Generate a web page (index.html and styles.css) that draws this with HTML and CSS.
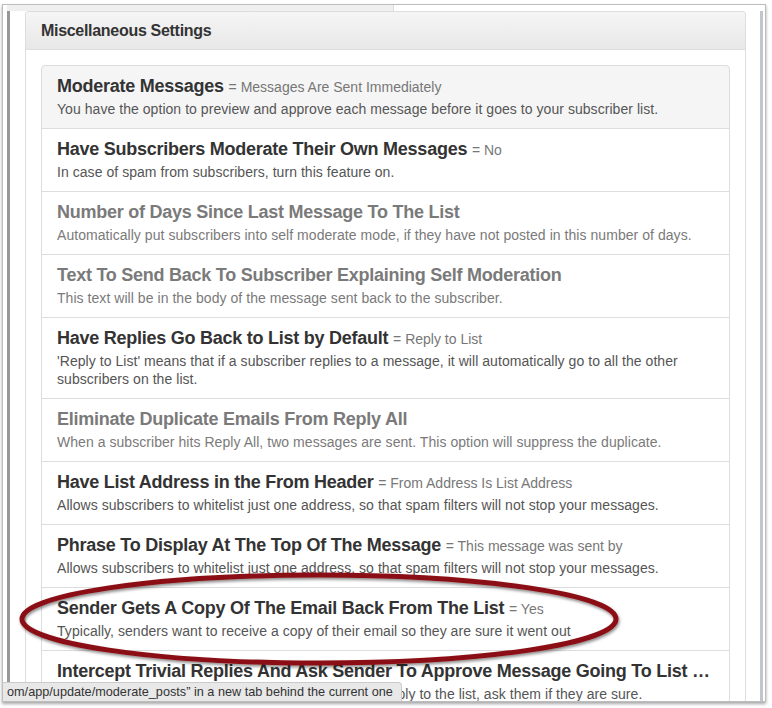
FILE: index.html
```html
<!doctype html>
<html lang="en">
<head>
    <meta charset="UTF-8">
    <title>Miscellaneous Settings</title>
    <link rel="stylesheet" href="styles.css">
</head>
<body>
    <div class="shot">
        <div class="gutter"></div>
        <div class="app">
            <div class="topstrip"><span class="tab"></span></div>
            <div class="content">
                <div class="panel">
                    <div class="panel-heading">
                        <h3 class="panel-title">Miscellaneous Settings</h3>
                    </div>
                    <div class="panel-body">
                        <ul class="list-group">
                            <li class="item hover">
                                <h4>Moderate Messages <small>= Messages Are Sent Immediately</small></h4>
                                <p>You have the option to preview and approve each message before it goes to your subscriber list.</p>
                            </li>
                            <li class="item">
                                <h4>Have Subscribers Moderate Their Own Messages <small>= No</small></h4>
                                <p>In case of spam from subscribers, turn this feature on.</p>
                            </li>
                            <li class="item disabled">
                                <h4>Number of Days Since Last Message To The List</h4>
                                <p>Automatically put subscribers into self moderate mode, if they have not posted in this number of days.</p>
                            </li>
                            <li class="item disabled">
                                <h4>Text To Send Back To Subscriber Explaining Self Moderation</h4>
                                <p>This text will be in the body of the message sent back to the subscriber.</p>
                            </li>
                            <li class="item">
                                <h4>Have Replies Go Back to List by Default <small>= Reply to List</small></h4>
                                <p>'Reply to List' means that if a subscriber replies to a message, it will automatically go to all the other subscribers on the list.</p>
                            </li>
                            <li class="item disabled">
                                <h4>Eliminate Duplicate Emails From Reply All</h4>
                                <p>When a subscriber hits Reply All, two messages are sent. This option will suppress the duplicate.</p>
                            </li>
                            <li class="item">
                                <h4>Have List Address in the From Header <small>= From Address Is List Address</small></h4>
                                <p>Allows subscribers to whitelist just one address, so that spam filters will not stop your messages.</p>
                            </li>
                            <li class="item">
                                <h4>Phrase To Display At The Top Of The Message <small>= This message was sent by</small></h4>
                                <p>Allows subscribers to whitelist just one address, so that spam filters will not stop your messages.</p>
                            </li>
                            <li class="item">
                                <h4>Sender Gets A Copy Of The Email Back From The List <small>= Yes</small></h4>
                                <p>Typically, senders want to receive a copy of their email so they are sure it went out</p>
                            </li>
                            <li class="item">
                                <h4>Intercept Trivial Replies And Ask Sender To Approve Message Going To List …</h4>
                                <p>If a subscriber sends a brief 'thanks' or 'Me too' as a reply to the list, ask them if they are sure.</p>
                            </li>
                        </ul>
                    </div>
                </div>
                <div class="rail"></div>
            </div>
        </div>
        <div class="status">om/app/update/moderate_posts” in a new tab behind the current one</div>
    </div>

    <!-- annotation -->
    <svg class="mark" width="772" height="708" viewBox="0 0 772 708">
        <defs>
            <filter id="shade" x="-10%" y="-30%" width="120%" height="160%">
                <feDropShadow dx="1" dy="2" stdDeviation="1.5" flood-color="#000" flood-opacity="0.45"/>
            </filter>
        </defs>
        <ellipse cx="319" cy="619" rx="297" ry="44" fill="none" stroke="#8b1012" stroke-width="5" filter="url(#shade)"/>
    </svg>
</body>
</html>
```

FILE: styles.css
```css
* {
    margin: 0;
    padding: 0;
    list-style: none;
    box-sizing: border-box;
}
body {
    background: #fff;
    font-family: "Liberation Sans", Arial, sans-serif;
    color: #333;
    position: relative;
    width: 772px;
    height: 708px;
    overflow: hidden;
}
.shot {
    margin: 4px 0 0 2px;
    width: 764px;
    height: 698px;
    border: 1px solid #bdbdbd;
    box-shadow: 0 2px 3px rgba(0,0,0,.35);
    display: flex;
    position: relative;
    overflow: hidden;
}
.gutter {
    width: 4px;
    flex: none;
}
.app {
    flex: 1;
    display: flex;
    flex-direction: column;
}
.topstrip {
    height: 6px;
    flex: none;
    display: flex;
}
.topstrip .tab {
    width: 387px;
    background: #efefef;
    border-right: 1px solid #dcdcdc;
}
.content {
    flex: 1;
    display: flex;
    border-left: 3px solid #979797;
    padding-left: 15px;
    overflow: hidden;
}
.rail {
    width: 3px;
    margin-left: 14px;
    background: #bfc6cd;
    flex: none;
}

/* panel */
.panel {
    width: 721px;
    flex: none;
    border: 1px solid #ddd;
    border-bottom: 0;
    border-radius: 4px 4px 0 0;
}
.panel-heading {
    padding: 10px 15px;
    background: linear-gradient(#f5f5f5, #e8e8e8);
    border-bottom: 1px solid #ddd;
    border-radius: 3px 3px 0 0;
}
.panel-title {
    font-size: 16px;
    line-height: 17px;
    font-weight: bold;
    letter-spacing: -0.3px;
    color: #333;
}
.panel-body {
    padding: 15px;
}

/* list */
.list-group .item {
    padding: 10px 15px;
    border: 1px solid #ddd;
    margin-bottom: -1px;
    background: #fff;
}
.list-group .item:first-child {
    border-radius: 4px 4px 0 0;
}
.list-group .item.hover {
    background: #f5f5f5;
}
.item h4 {
    height: 20px;
    font-size: 18px;
    line-height: 20px;
    font-weight: bold;
    letter-spacing: -0.25px;
    color: #333;
    margin-bottom: 4px;
    white-space: nowrap;
}
.item h4 small {
    font-size: 14px;
    line-height: 1;
    font-weight: normal;
    letter-spacing: 0;
    color: #777;
}
.item p {
    font-size: 14px;
    line-height: 18px;
    letter-spacing: 0.05px;
    color: #555;
}
.item.disabled h4,
.item.disabled p {
    color: #7a7a7a;
}

/* browser status bubble */
.status {
    position: absolute;
    left: 0;
    bottom: 0;
    width: 399px;
    height: 19px;
    padding-left: 4px;
    background: #e8e8e8;
    border-top: 1px solid #cbcbcb;
    border-right: 1px solid #cbcbcb;
    border-top-right-radius: 4px;
    font-size: 12.7px;
    line-height: 18px;
    color: #333;
    white-space: nowrap;
    overflow: hidden;
}

.mark {
    position: absolute;
    left: 0;
    top: 0;
    pointer-events: none;
}
```
